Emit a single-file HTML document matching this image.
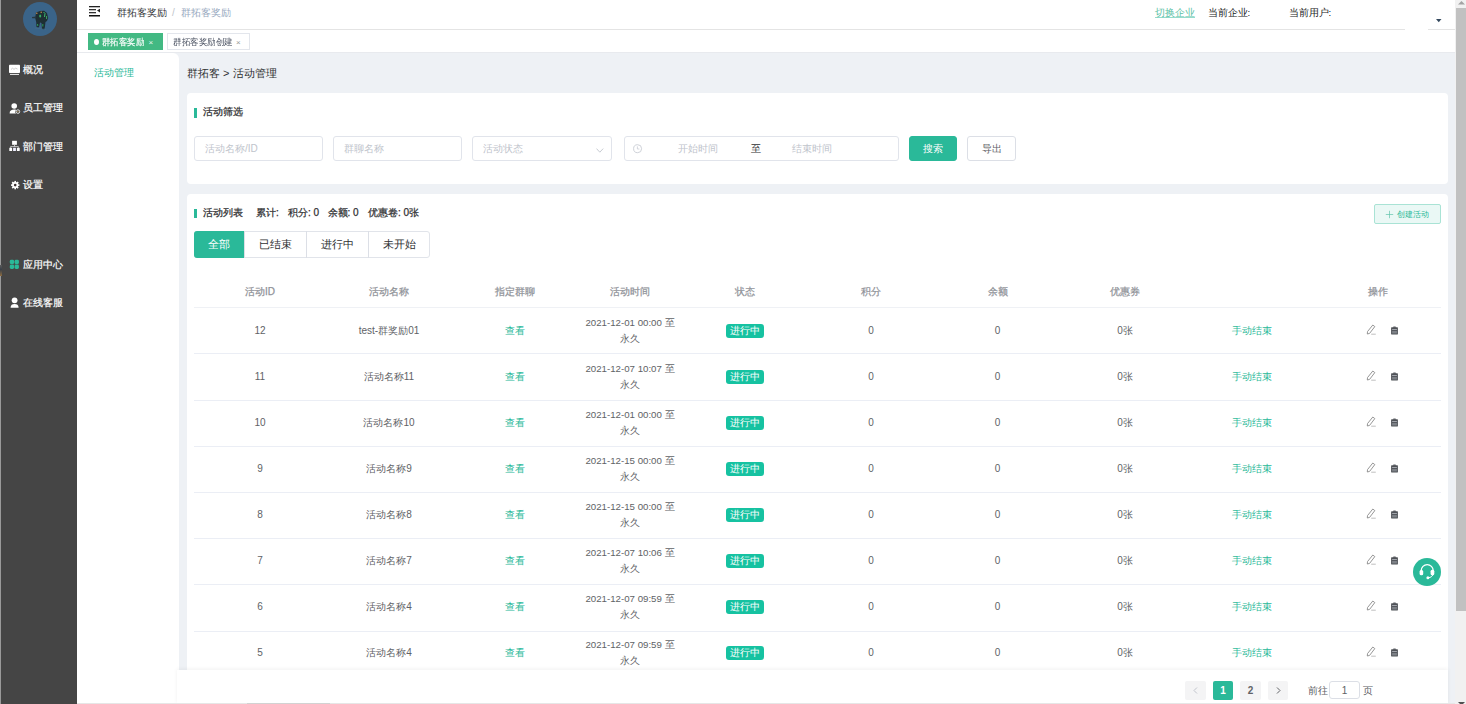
<!DOCTYPE html>
<html><head><meta charset="utf-8">
<style>
*{box-sizing:border-box;margin:0;padding:0}
html,body{width:1466px;height:704px;overflow:hidden;background:#fff;font-family:"Liberation Sans",sans-serif;color:#333}
.abs{position:absolute}
#side{left:0;top:0;width:77px;height:704px;background:#454545;border-left:1px solid #9a9a9a}
#avatar{left:22px;top:2px;width:34px;height:34px;border-radius:50%;background:#3a6489}
.mi{position:absolute;left:22px;color:#fff;font-size:9.8px;line-height:14px;white-space:nowrap;-webkit-text-stroke:0.2px #fff}
.mi .ic{display:inline-block;width:10px;height:10px;vertical-align:-1px;margin-right:4px}
#header{left:77px;top:0;width:1379px;height:30px;background:#fff;border-bottom:1px solid #e4e4e4}
#tags{left:77px;top:30px;width:1379px;height:23px;background:#fff;border-bottom:1px solid #e8eaee}
#main{left:77px;top:53px;width:1379px;height:651px;background:#eef1f5}
#sub{left:77px;top:53px;width:102px;height:651px;background:#fff;border-top-right-radius:6px}
.card{position:absolute;left:187px;width:1261px;background:#fff;border-radius:4px}
.t{position:absolute;white-space:nowrap}
.inp{position:absolute;top:136px;height:25px;border:1px solid #e1e4eb;border-radius:3px;background:#fff;color:#c0c4cc;font-size:10px;line-height:23px;padding-left:10px;white-space:nowrap}
.btn{position:absolute;top:136px;height:25px;border-radius:3px;font-size:10px;line-height:23px;text-align:center}
#sb{left:1455px;top:0;width:11px;height:704px;background:#f1f1f1}
#thumb{left:1456px;top:8px;width:10px;height:603px;background:#c1c1c1}
.cell{position:absolute;text-align:center;font-size:10px;line-height:45px;color:#606266;white-space:nowrap}
.tag{display:inline-block;height:14px;line-height:14px;padding:0 4px;background:#16c2a1;color:#fff;border-radius:3px;font-size:10px;vertical-align:middle}
.pg{position:absolute;top:681px;height:19px;background:#f4f4f5;border-radius:2px;color:#606266;font-size:10px;font-weight:bold;line-height:19px;text-align:center}
</style></head><body>

<div id="side" class="abs">
  <div id="avatar" class="abs"></div>
  <svg class="abs" style="left:27px;top:8px;filter:blur(0.45px)" width="24" height="24" viewBox="0 0 24 24"><g opacity="0.92"><path d="M8 4.5 L12 3 L16 2.8 L19 5 L20.2 10 L19 13 L17.5 14 L16.8 19.5 L16.2 21.5 L14 21 L13.5 15 L12 14.5 L11.2 18.5 L10.5 19.5 L8.5 19 L8.2 14 L7.2 10 Z" fill="#1d2b2c"/><path d="M8 8.5 L4 9 L4.2 10.2 L8 10.2 Z" fill="#26343a"/><ellipse cx="12.2" cy="8" rx="1" ry="1.6" fill="#36b460"/><path d="M15.5 4 L17 5.5 L16.5 9" stroke="#3fc070" stroke-width="1" fill="none"/><path d="M18.6 8 V11" stroke="#3aaa60" stroke-width="1"/><path d="M14.8 16 V18.5 M9.5 16 L9.8 18" stroke="#2aa050" stroke-width="1"/><circle cx="8.8" cy="5.2" r="0.8" fill="#c98a4a"/><circle cx="13.2" cy="4.2" r="0.8" fill="#c98a4a"/></g><path d="M7 20 L18 21.5" stroke="#4a7088" stroke-width="1" opacity="0.6"/></svg>
  <div class="mi" style="top:63px">概况</div>
  <div class="mi" style="top:101px">员工管理</div>
  <div class="mi" style="top:140px">部门管理</div>
  <div class="mi" style="top:178px">设置</div>
  <div class="mi" style="top:258px">应用中心</div>
  <div class="mi" style="top:296px">在线客服</div>
  <svg class="abs" style="left:7px;top:64px" width="13" height="12" viewBox="0 0 13 12"><rect x="1" y="0.8" width="11" height="8.2" rx="0.8" fill="#fff"/><path d="M3 5.5 L4.5 4.2 L6 5.4 L7.5 4.2 L9.5 5" fill="none" stroke="#b7b7b7" stroke-width="0.7"/><rect x="2" y="9.9" width="9" height="1.1" fill="#e0e0e0"/></svg>
  <svg class="abs" style="left:7px;top:101.5px" width="13" height="13" viewBox="0 0 13 13"><circle cx="6.2" cy="4" r="2.8" fill="#fff"/><path d="M1.6 11.6 C1.6 8.6 3.5 7.6 6.1 7.6 C7 7.6 7.6 7.7 8.2 8 A2.5 2.5 0 0 0 8 11.6 Z" fill="#fff"/><circle cx="9.9" cy="9.6" r="1.8" fill="none" stroke="#f0f0f0" stroke-width="0.9"/><circle cx="9.9" cy="9.6" r="0.6" fill="#c9a860"/></svg>
  <svg class="abs" style="left:6.5px;top:139px" width="13" height="13" viewBox="0 0 13 13"><rect x="4.1" y="1.8" width="4.8" height="4" fill="#fff"/><path d="M6.5 5.8 V7.6 M2.6 8.8 V7.6 H10.4 V8.8" fill="none" stroke="#ddd" stroke-width="0.8"/><rect x="1.3" y="8.8" width="2.8" height="3.2" fill="#fff"/><rect x="5.1" y="8.8" width="2.8" height="3.2" fill="#eef"/><rect x="8.9" y="8.8" width="2.8" height="3.2" fill="#fff"/></svg>
  <svg class="abs" style="left:6.5px;top:178px" width="13" height="13" viewBox="0 0 13 13"><g fill="#fff"><circle cx="7.2" cy="7.1" r="3.1"/><g transform="translate(7.2 7.1)"><rect x="-0.8" y="-4.2" width="1.6" height="8.4"/><rect x="-0.8" y="-4.2" width="1.6" height="8.4" transform="rotate(45)"/><rect x="-0.8" y="-4.2" width="1.6" height="8.4" transform="rotate(90)"/><rect x="-0.8" y="-4.2" width="1.6" height="8.4" transform="rotate(135)"/></g></g><circle cx="7.2" cy="7.1" r="1.3" fill="#3a3030"/></svg>
  <svg class="abs" style="left:8px;top:259px" width="11" height="11" viewBox="0 0 11 11"><g fill="#2ab999"><rect x="0.8" y="0.8" width="4.3" height="4.3" rx="1.4"/><rect x="5.6" y="0.8" width="4.3" height="4.3" rx="1.4" transform="rotate(0)"/><rect x="0.8" y="5.6" width="4.3" height="4.3" rx="1.4"/><rect x="5.6" y="5.6" width="4.3" height="4.3" rx="1.4"/></g></svg>
  <svg class="abs" style="left:8px;top:296px" width="12" height="13" viewBox="0 0 12 13"><circle cx="5.6" cy="4.3" r="2.9" fill="#fff"/><path d="M1.6 11.8 C1.6 8.9 3.2 7.9 5.6 7.9 C8 7.9 9.6 8.9 9.6 11.8 Z" fill="#fff"/></svg>
</div>

<div class="abs" style="left:0;top:265px;width:2px;height:11px;background:linear-gradient(#5a5a5a,#3a4048 40%,#8a6a40)"></div>
<div id="header" class="abs"></div>
<svg class="abs" style="left:89px;top:6px" width="12" height="11" viewBox="0 0 12 11"><rect x="0" y="0" width="11" height="1.3" fill="#222"/><rect x="0" y="3" width="7" height="1.3" fill="#333"/><rect x="0" y="6" width="7" height="1.3" fill="#333"/><rect x="0" y="9" width="11" height="1.5" fill="#111"/><path d="M11 2.8 L8 4.6 L11 6.4Z" fill="#222"/></svg>
<div class="t" style="left:117px;top:5.5px;font-size:9.6px;line-height:14px;color:#303133">群拓客奖励</div>
<div class="t" style="left:172px;top:5.5px;font-size:10px;line-height:14px;color:#c0c4cc">/</div>
<div class="t" style="left:180.5px;top:5.5px;font-size:9.6px;line-height:14px;color:#97a8be">群拓客奖励</div>
<div class="t" style="left:1155px;top:5.5px;font-size:9.6px;line-height:14px;color:#5cbfa6;text-decoration:underline;text-decoration-color:rgba(42,185,153,0.5);text-decoration-thickness:0.6px;text-underline-offset:0.5px">切换企业</div>
<div class="t" style="left:1207.5px;top:5.5px;font-size:9.7px;line-height:14px;color:#222">当前企业:</div>
<div class="t" style="left:1288.5px;top:5.5px;font-size:9.7px;line-height:14px;color:#222">当前用户:</div>
<div class="abs" style="left:1405px;top:29px;width:23px;height:1px;background:#fff"></div>
<svg class="abs" style="left:1435.5px;top:19px" width="6" height="4" viewBox="0 0 6 4"><path d="M0 0 L5.5 0 L2.75 3.2Z" fill="#34495e"/></svg>
<div id="tags" class="abs"></div>
<div class="abs" style="left:88px;top:33px;width:75px;height:17px;background:#42b983"></div>
<div class="abs" style="left:93.5px;top:38.5px;width:5.5px;height:6.5px;border-radius:50%;background:#fff"></div>
<div class="t" style="left:102px;top:35.8px;font-size:8.8px;transform:scaleX(0.935);-webkit-text-stroke:0.15px #fff;transform-origin:0 0;line-height:13px;color:#fff">群拓客奖励</div>
<div class="t" style="left:148.5px;top:35.5px;font-size:8px;line-height:13px;color:#e8f6ef">×</div>
<div class="abs" style="left:167px;top:33px;width:83px;height:17px;background:#fff;border:1px solid #e3e6ec"></div>
<div class="t" style="left:172.5px;top:35.8px;font-size:8.8px;transform:scaleX(0.95);transform-origin:0 0;line-height:13px;color:#495060">群拓客奖励创建</div>
<div class="t" style="left:236px;top:35.5px;font-size:8px;line-height:13px;color:#999">×</div>
<div id="main" class="abs"></div>
<div id="sub" class="abs"></div>

<div class="t" style="left:94px;top:65.5px;font-size:10px;line-height:14px;color:#2ab999">活动管理</div>
<div class="t" style="left:187px;top:65px;font-size:11px;line-height:16px;color:#303133">群拓客 &gt; 活动管理</div>

<div class="card" style="top:93px;height:91px"></div>
<div class="abs" style="left:194px;top:108px;width:3px;height:10px;background:#2ab999"></div>
<div class="t" style="left:203px;top:105px;font-size:10px;line-height:14px;color:#303133;-webkit-text-stroke:0.25px #303133">活动筛选</div>
<div class="inp" style="left:194px;width:129px">活动名称/ID</div>
<div class="inp" style="left:333px;width:129px">群聊名称</div>
<div class="inp" style="left:472px;width:140px">活动状态<svg class="abs" style="left:123px;top:11px" width="8" height="5" viewBox="0 0 8 5"><path d="M0.5 0.6 L3.8 4.2 L7.2 0.6" fill="none" stroke="#c0c4cc" stroke-width="0.9"/></svg></div>
<div class="inp" style="left:624px;width:275px;padding:0">
 <svg class="abs" style="left:8px;top:6px" width="11" height="11" viewBox="0 0 11 11"><circle cx="4.6" cy="5.7" r="4" fill="none" stroke="#c8ccd4" stroke-width="0.9"/><path d="M4.4 3.4 V6 H6.4" fill="none" stroke="#c8ccd4" stroke-width="0.8"/></svg>
 <span class="abs" style="left:53px">开始时间</span>
 <span class="abs" style="left:126px;color:#303133">至</span>
 <span class="abs" style="left:167px">结束时间</span>
</div>
<div class="btn" style="left:909px;width:48px;background:#2ab999;color:#fff;border:1px solid #2ab999">搜索</div>
<div class="btn" style="left:967px;width:49px;background:#fff;color:#606266;border:1px solid #dcdfe6">导出</div>
<div class="card" style="top:194px;height:510px"></div>
<div class="abs" style="left:194px;top:209px;width:3px;height:9px;background:#2ab999"></div>
<div class="t" style="left:203px;top:206px;font-size:10px;line-height:14px;color:#303133;-webkit-text-stroke:0.25px #303133">活动列表</div>
<div class="t" style="left:256px;top:206px;font-size:10px;line-height:14px;color:#303133;-webkit-text-stroke:0.25px #303133">累计:</div>
<div class="t" style="left:288px;top:206px;font-size:10px;line-height:14px;color:#303133;-webkit-text-stroke:0.25px #303133">积分: 0</div>
<div class="t" style="left:327.5px;top:206px;font-size:10px;line-height:14px;color:#303133;-webkit-text-stroke:0.25px #303133">余额: 0</div>
<div class="t" style="left:368px;top:206px;font-size:10px;line-height:14px;color:#303133;-webkit-text-stroke:0.25px #303133">优惠卷: 0张</div>
<div class="abs" style="left:1374px;top:204px;width:67px;height:20px;border:1px solid #a9e3d5;background:#eaf8f5;border-radius:2px;"></div>
<svg class="abs" style="left:1385px;top:209.5px" width="9" height="9" viewBox="0 0 9 9"><path d="M4.5 0.8 V8.2 M0.8 4.5 H8.2" stroke="#62c4ac" stroke-width="0.7"/></svg>
<div class="t" style="left:1397px;top:207.5px;font-size:8.3px;line-height:13px;color:#2ab999">创建活动</div>
<div class="abs" style="left:194px;top:230.5px;width:236px;height:27px;border:1px solid #e1e4ea;border-radius:3px;background:#fff"></div>
<div class="abs" style="left:194px;top:230.5px;width:50px;height:27px;background:#2ab999;border-radius:3px 0 0 3px;color:#fff;font-size:11px;line-height:27px;text-align:center">全部</div>
<div class="abs" style="left:244px;top:230.5px;width:62px;height:27px;border-left:1px solid #dcdfe6;color:#303133;font-size:11px;line-height:27px;text-align:center">已结束</div>
<div class="abs" style="left:306px;top:230.5px;width:62px;height:27px;border-left:1px solid #dcdfe6;color:#303133;font-size:11px;line-height:27px;text-align:center">进行中</div>
<div class="abs" style="left:368px;top:230.5px;width:62px;height:27px;border-left:1px solid #dcdfe6;color:#303133;font-size:11px;line-height:27px;text-align:center">未开始</div>
<div class="cell" style="left:194px;top:277.00px;width:132px;height:30px;color:#909399;-webkit-text-stroke:0.25px #909399;line-height:30px">活动ID</div>
<div class="cell" style="left:326px;top:277.00px;width:126px;height:30px;color:#909399;-webkit-text-stroke:0.25px #909399;line-height:30px">活动名称</div>
<div class="cell" style="left:452px;top:277.00px;width:126px;height:30px;color:#909399;-webkit-text-stroke:0.25px #909399;line-height:30px">指定群聊</div>
<div class="cell" style="left:578px;top:277.00px;width:104px;height:30px;color:#909399;-webkit-text-stroke:0.25px #909399;line-height:30px">活动时间</div>
<div class="cell" style="left:682px;top:277.00px;width:126px;height:30px;color:#909399;-webkit-text-stroke:0.25px #909399;line-height:30px">状态</div>
<div class="cell" style="left:808px;top:277.00px;width:126px;height:30px;color:#909399;-webkit-text-stroke:0.25px #909399;line-height:30px">积分</div>
<div class="cell" style="left:934px;top:277.00px;width:127px;height:30px;color:#909399;-webkit-text-stroke:0.25px #909399;line-height:30px">余额</div>
<div class="cell" style="left:1061px;top:277.00px;width:128px;height:30px;color:#909399;-webkit-text-stroke:0.25px #909399;line-height:30px">优惠券</div>
<div class="cell" style="left:1189px;top:277.00px;width:125px;height:30px;color:#909399;-webkit-text-stroke:0.25px #909399;line-height:30px"></div>
<div class="cell" style="left:1314px;top:277.00px;width:127px;height:30px;color:#909399;-webkit-text-stroke:0.25px #909399;line-height:30px">操作</div>
<div class="abs" style="left:194px;top:307px;width:1247px;height:1px;background:#eff1f5"></div>
<div class="cell" style="left:194px;top:307.80px;width:132px;height:45px;">12</div>
<div class="cell" style="left:326px;top:307.80px;width:126px;height:45px;">test-群奖励01</div>
<div class="cell" style="left:452px;top:307.80px;width:126px;height:45px;color:#2ab999">查看</div>
<div class="cell" style="left:578px;top:307.80px;width:104px;height:45px;line-height:16px"><div style="line-height:16px;padding-top:7.5px;font-size:9.7px">2021-12-01 00:00 至<br>永久</div></div>
<div class="cell" style="left:682px;top:307.80px;width:126px;height:45px;"><span class="tag">进行中</span></div>
<div class="cell" style="left:808px;top:307.80px;width:126px;height:45px;">0</div>
<div class="cell" style="left:934px;top:307.80px;width:127px;height:45px;">0</div>
<div class="cell" style="left:1061px;top:307.80px;width:128px;height:45px;">0张</div>
<div class="cell" style="left:1189px;top:307.80px;width:125px;height:45px;color:#2ab999">手动结束</div>
<svg class="abs" style="left:1366px;top:324.30px" width="11" height="11" viewBox="0 0 11 11"><path d="M6.8 1 L8.8 2.6 L3.6 9.4 L1.3 10 L1.5 7.6 Z" fill="none" stroke="#8a8a8a" stroke-width="0.9"/><path d="M5.2 10.2 H9.8" stroke="#b0b0b0" stroke-width="0.8"/></svg>
<svg class="abs" style="left:1391px;top:326.30px" width="8" height="9" viewBox="0 0 8 9"><rect x="0.1" y="1.3" width="6.8" height="7.2" rx="0.4" fill="#4f5257"/><rect x="2.1" y="0.4" width="2.8" height="1.6" rx="0.5" fill="#5a5d62"/><rect x="1.1" y="3.1" width="4.8" height="0.8" fill="#b8bcc2"/><rect x="1.1" y="4.9" width="4.8" height="2.6" fill="#7d8187"/></svg>
<div class="abs" style="left:194px;top:353px;width:1247px;height:1px;background:#ebeef5"></div>
<div class="cell" style="left:194px;top:353.80px;width:132px;height:45px;">11</div>
<div class="cell" style="left:326px;top:353.80px;width:126px;height:45px;">活动名称11</div>
<div class="cell" style="left:452px;top:353.80px;width:126px;height:45px;color:#2ab999">查看</div>
<div class="cell" style="left:578px;top:353.80px;width:104px;height:45px;line-height:16px"><div style="line-height:16px;padding-top:7.5px;font-size:9.7px">2021-12-07 10:07 至<br>永久</div></div>
<div class="cell" style="left:682px;top:353.80px;width:126px;height:45px;"><span class="tag">进行中</span></div>
<div class="cell" style="left:808px;top:353.80px;width:126px;height:45px;">0</div>
<div class="cell" style="left:934px;top:353.80px;width:127px;height:45px;">0</div>
<div class="cell" style="left:1061px;top:353.80px;width:128px;height:45px;">0张</div>
<div class="cell" style="left:1189px;top:353.80px;width:125px;height:45px;color:#2ab999">手动结束</div>
<svg class="abs" style="left:1366px;top:370.30px" width="11" height="11" viewBox="0 0 11 11"><path d="M6.8 1 L8.8 2.6 L3.6 9.4 L1.3 10 L1.5 7.6 Z" fill="none" stroke="#8a8a8a" stroke-width="0.9"/><path d="M5.2 10.2 H9.8" stroke="#b0b0b0" stroke-width="0.8"/></svg>
<svg class="abs" style="left:1391px;top:372.30px" width="8" height="9" viewBox="0 0 8 9"><rect x="0.1" y="1.3" width="6.8" height="7.2" rx="0.4" fill="#4f5257"/><rect x="2.1" y="0.4" width="2.8" height="1.6" rx="0.5" fill="#5a5d62"/><rect x="1.1" y="3.1" width="4.8" height="0.8" fill="#b8bcc2"/><rect x="1.1" y="4.9" width="4.8" height="2.6" fill="#7d8187"/></svg>
<div class="abs" style="left:194px;top:400px;width:1247px;height:1px;background:#ebeef5"></div>
<div class="cell" style="left:194px;top:399.80px;width:132px;height:45px;">10</div>
<div class="cell" style="left:326px;top:399.80px;width:126px;height:45px;">活动名称10</div>
<div class="cell" style="left:452px;top:399.80px;width:126px;height:45px;color:#2ab999">查看</div>
<div class="cell" style="left:578px;top:399.80px;width:104px;height:45px;line-height:16px"><div style="line-height:16px;padding-top:7.5px;font-size:9.7px">2021-12-01 00:00 至<br>永久</div></div>
<div class="cell" style="left:682px;top:399.80px;width:126px;height:45px;"><span class="tag">进行中</span></div>
<div class="cell" style="left:808px;top:399.80px;width:126px;height:45px;">0</div>
<div class="cell" style="left:934px;top:399.80px;width:127px;height:45px;">0</div>
<div class="cell" style="left:1061px;top:399.80px;width:128px;height:45px;">0张</div>
<div class="cell" style="left:1189px;top:399.80px;width:125px;height:45px;color:#2ab999">手动结束</div>
<svg class="abs" style="left:1366px;top:416.30px" width="11" height="11" viewBox="0 0 11 11"><path d="M6.8 1 L8.8 2.6 L3.6 9.4 L1.3 10 L1.5 7.6 Z" fill="none" stroke="#8a8a8a" stroke-width="0.9"/><path d="M5.2 10.2 H9.8" stroke="#b0b0b0" stroke-width="0.8"/></svg>
<svg class="abs" style="left:1391px;top:418.30px" width="8" height="9" viewBox="0 0 8 9"><rect x="0.1" y="1.3" width="6.8" height="7.2" rx="0.4" fill="#4f5257"/><rect x="2.1" y="0.4" width="2.8" height="1.6" rx="0.5" fill="#5a5d62"/><rect x="1.1" y="3.1" width="4.8" height="0.8" fill="#b8bcc2"/><rect x="1.1" y="4.9" width="4.8" height="2.6" fill="#7d8187"/></svg>
<div class="abs" style="left:194px;top:446px;width:1247px;height:1px;background:#ebeef5"></div>
<div class="cell" style="left:194px;top:445.80px;width:132px;height:45px;">9</div>
<div class="cell" style="left:326px;top:445.80px;width:126px;height:45px;">活动名称9</div>
<div class="cell" style="left:452px;top:445.80px;width:126px;height:45px;color:#2ab999">查看</div>
<div class="cell" style="left:578px;top:445.80px;width:104px;height:45px;line-height:16px"><div style="line-height:16px;padding-top:7.5px;font-size:9.7px">2021-12-15 00:00 至<br>永久</div></div>
<div class="cell" style="left:682px;top:445.80px;width:126px;height:45px;"><span class="tag">进行中</span></div>
<div class="cell" style="left:808px;top:445.80px;width:126px;height:45px;">0</div>
<div class="cell" style="left:934px;top:445.80px;width:127px;height:45px;">0</div>
<div class="cell" style="left:1061px;top:445.80px;width:128px;height:45px;">0张</div>
<div class="cell" style="left:1189px;top:445.80px;width:125px;height:45px;color:#2ab999">手动结束</div>
<svg class="abs" style="left:1366px;top:462.30px" width="11" height="11" viewBox="0 0 11 11"><path d="M6.8 1 L8.8 2.6 L3.6 9.4 L1.3 10 L1.5 7.6 Z" fill="none" stroke="#8a8a8a" stroke-width="0.9"/><path d="M5.2 10.2 H9.8" stroke="#b0b0b0" stroke-width="0.8"/></svg>
<svg class="abs" style="left:1391px;top:464.30px" width="8" height="9" viewBox="0 0 8 9"><rect x="0.1" y="1.3" width="6.8" height="7.2" rx="0.4" fill="#4f5257"/><rect x="2.1" y="0.4" width="2.8" height="1.6" rx="0.5" fill="#5a5d62"/><rect x="1.1" y="3.1" width="4.8" height="0.8" fill="#b8bcc2"/><rect x="1.1" y="4.9" width="4.8" height="2.6" fill="#7d8187"/></svg>
<div class="abs" style="left:194px;top:492px;width:1247px;height:1px;background:#ebeef5"></div>
<div class="cell" style="left:194px;top:491.80px;width:132px;height:45px;">8</div>
<div class="cell" style="left:326px;top:491.80px;width:126px;height:45px;">活动名称8</div>
<div class="cell" style="left:452px;top:491.80px;width:126px;height:45px;color:#2ab999">查看</div>
<div class="cell" style="left:578px;top:491.80px;width:104px;height:45px;line-height:16px"><div style="line-height:16px;padding-top:7.5px;font-size:9.7px">2021-12-15 00:00 至<br>永久</div></div>
<div class="cell" style="left:682px;top:491.80px;width:126px;height:45px;"><span class="tag">进行中</span></div>
<div class="cell" style="left:808px;top:491.80px;width:126px;height:45px;">0</div>
<div class="cell" style="left:934px;top:491.80px;width:127px;height:45px;">0</div>
<div class="cell" style="left:1061px;top:491.80px;width:128px;height:45px;">0张</div>
<div class="cell" style="left:1189px;top:491.80px;width:125px;height:45px;color:#2ab999">手动结束</div>
<svg class="abs" style="left:1366px;top:508.30px" width="11" height="11" viewBox="0 0 11 11"><path d="M6.8 1 L8.8 2.6 L3.6 9.4 L1.3 10 L1.5 7.6 Z" fill="none" stroke="#8a8a8a" stroke-width="0.9"/><path d="M5.2 10.2 H9.8" stroke="#b0b0b0" stroke-width="0.8"/></svg>
<svg class="abs" style="left:1391px;top:510.30px" width="8" height="9" viewBox="0 0 8 9"><rect x="0.1" y="1.3" width="6.8" height="7.2" rx="0.4" fill="#4f5257"/><rect x="2.1" y="0.4" width="2.8" height="1.6" rx="0.5" fill="#5a5d62"/><rect x="1.1" y="3.1" width="4.8" height="0.8" fill="#b8bcc2"/><rect x="1.1" y="4.9" width="4.8" height="2.6" fill="#7d8187"/></svg>
<div class="abs" style="left:194px;top:538px;width:1247px;height:1px;background:#ebeef5"></div>
<div class="cell" style="left:194px;top:537.80px;width:132px;height:45px;">7</div>
<div class="cell" style="left:326px;top:537.80px;width:126px;height:45px;">活动名称7</div>
<div class="cell" style="left:452px;top:537.80px;width:126px;height:45px;color:#2ab999">查看</div>
<div class="cell" style="left:578px;top:537.80px;width:104px;height:45px;line-height:16px"><div style="line-height:16px;padding-top:7.5px;font-size:9.7px">2021-12-07 10:06 至<br>永久</div></div>
<div class="cell" style="left:682px;top:537.80px;width:126px;height:45px;"><span class="tag">进行中</span></div>
<div class="cell" style="left:808px;top:537.80px;width:126px;height:45px;">0</div>
<div class="cell" style="left:934px;top:537.80px;width:127px;height:45px;">0</div>
<div class="cell" style="left:1061px;top:537.80px;width:128px;height:45px;">0张</div>
<div class="cell" style="left:1189px;top:537.80px;width:125px;height:45px;color:#2ab999">手动结束</div>
<svg class="abs" style="left:1366px;top:554.30px" width="11" height="11" viewBox="0 0 11 11"><path d="M6.8 1 L8.8 2.6 L3.6 9.4 L1.3 10 L1.5 7.6 Z" fill="none" stroke="#8a8a8a" stroke-width="0.9"/><path d="M5.2 10.2 H9.8" stroke="#b0b0b0" stroke-width="0.8"/></svg>
<svg class="abs" style="left:1391px;top:556.30px" width="8" height="9" viewBox="0 0 8 9"><rect x="0.1" y="1.3" width="6.8" height="7.2" rx="0.4" fill="#4f5257"/><rect x="2.1" y="0.4" width="2.8" height="1.6" rx="0.5" fill="#5a5d62"/><rect x="1.1" y="3.1" width="4.8" height="0.8" fill="#b8bcc2"/><rect x="1.1" y="4.9" width="4.8" height="2.6" fill="#7d8187"/></svg>
<div class="abs" style="left:194px;top:584px;width:1247px;height:1px;background:#ebeef5"></div>
<div class="cell" style="left:194px;top:583.80px;width:132px;height:45px;">6</div>
<div class="cell" style="left:326px;top:583.80px;width:126px;height:45px;">活动名称4</div>
<div class="cell" style="left:452px;top:583.80px;width:126px;height:45px;color:#2ab999">查看</div>
<div class="cell" style="left:578px;top:583.80px;width:104px;height:45px;line-height:16px"><div style="line-height:16px;padding-top:7.5px;font-size:9.7px">2021-12-07 09:59 至<br>永久</div></div>
<div class="cell" style="left:682px;top:583.80px;width:126px;height:45px;"><span class="tag">进行中</span></div>
<div class="cell" style="left:808px;top:583.80px;width:126px;height:45px;">0</div>
<div class="cell" style="left:934px;top:583.80px;width:127px;height:45px;">0</div>
<div class="cell" style="left:1061px;top:583.80px;width:128px;height:45px;">0张</div>
<div class="cell" style="left:1189px;top:583.80px;width:125px;height:45px;color:#2ab999">手动结束</div>
<svg class="abs" style="left:1366px;top:600.30px" width="11" height="11" viewBox="0 0 11 11"><path d="M6.8 1 L8.8 2.6 L3.6 9.4 L1.3 10 L1.5 7.6 Z" fill="none" stroke="#8a8a8a" stroke-width="0.9"/><path d="M5.2 10.2 H9.8" stroke="#b0b0b0" stroke-width="0.8"/></svg>
<svg class="abs" style="left:1391px;top:602.30px" width="8" height="9" viewBox="0 0 8 9"><rect x="0.1" y="1.3" width="6.8" height="7.2" rx="0.4" fill="#4f5257"/><rect x="2.1" y="0.4" width="2.8" height="1.6" rx="0.5" fill="#5a5d62"/><rect x="1.1" y="3.1" width="4.8" height="0.8" fill="#b8bcc2"/><rect x="1.1" y="4.9" width="4.8" height="2.6" fill="#7d8187"/></svg>
<div class="abs" style="left:194px;top:631px;width:1247px;height:1px;background:#ebeef5"></div>
<div class="cell" style="left:194px;top:629.80px;width:132px;height:45px;">5</div>
<div class="cell" style="left:326px;top:629.80px;width:126px;height:45px;">活动名称4</div>
<div class="cell" style="left:452px;top:629.80px;width:126px;height:45px;color:#2ab999">查看</div>
<div class="cell" style="left:578px;top:629.80px;width:104px;height:45px;line-height:16px"><div style="line-height:16px;padding-top:7.5px;font-size:9.7px">2021-12-07 09:59 至<br>永久</div></div>
<div class="cell" style="left:682px;top:629.80px;width:126px;height:45px;"><span class="tag">进行中</span></div>
<div class="cell" style="left:808px;top:629.80px;width:126px;height:45px;">0</div>
<div class="cell" style="left:934px;top:629.80px;width:127px;height:45px;">0</div>
<div class="cell" style="left:1061px;top:629.80px;width:128px;height:45px;">0张</div>
<div class="cell" style="left:1189px;top:629.80px;width:125px;height:45px;color:#2ab999">手动结束</div>
<svg class="abs" style="left:1366px;top:646.30px" width="11" height="11" viewBox="0 0 11 11"><path d="M6.8 1 L8.8 2.6 L3.6 9.4 L1.3 10 L1.5 7.6 Z" fill="none" stroke="#8a8a8a" stroke-width="0.9"/><path d="M5.2 10.2 H9.8" stroke="#b0b0b0" stroke-width="0.8"/></svg>
<svg class="abs" style="left:1391px;top:648.30px" width="8" height="9" viewBox="0 0 8 9"><rect x="0.1" y="1.3" width="6.8" height="7.2" rx="0.4" fill="#4f5257"/><rect x="2.1" y="0.4" width="2.8" height="1.6" rx="0.5" fill="#5a5d62"/><rect x="1.1" y="3.1" width="4.8" height="0.8" fill="#b8bcc2"/><rect x="1.1" y="4.9" width="4.8" height="2.6" fill="#7d8187"/></svg>
<div class="abs" style="left:194px;top:677px;width:1247px;height:1px;background:#ebeef5"></div>
<div class="abs" style="left:177px;top:670px;width:1271px;height:34px;background:#fff;box-shadow:0 -1px 4px rgba(0,0,0,0.06)"></div>
<div class="abs" style="left:77px;top:703px;width:1379px;height:1px;background:#e6e6e6"></div>
<div class="abs" style="left:247px;top:703px;width:83px;height:1px;background:#d2d2d2"></div>
<div class="pg" style="left:1185px;width:21px"><svg style="position:absolute;left:8px;top:6px" width="5" height="7" viewBox="0 0 5 7"><path d="M4 0.5 L1 3.5 L4 6.5" fill="none" stroke="#c0c4cc" stroke-width="1"/></svg></div>
<div class="pg" style="left:1213px;width:20px;background:#2ab999;color:#fff">1</div>
<div class="pg" style="left:1240px;width:21px">2</div>
<div class="pg" style="left:1268px;width:20px"><svg style="position:absolute;left:7.5px;top:6px" width="5" height="7" viewBox="0 0 5 7"><path d="M1 0.5 L4 3.5 L1 6.5" fill="none" stroke="#606266" stroke-width="1"/></svg></div>
<div class="t" style="left:1308px;top:684px;font-size:10px;line-height:14px;color:#606266">前往</div>
<div class="abs" style="left:1329px;top:681px;width:31px;height:18px;border:1px solid #dcdfe6;border-radius:3px;font-size:10px;line-height:18px;text-align:center;color:#606266">1</div>
<div class="t" style="left:1363px;top:684px;font-size:10px;line-height:14px;color:#606266">页</div>
<div class="abs" style="left:1413px;top:557.5px;width:28px;height:28px;border-radius:50%;background:#2ab999"></div>
<svg class="abs" style="left:1413px;top:557.5px" width="28" height="28" viewBox="0 0 28 28"><path d="M8.2 14.5 V12.6 A6 6 0 0 1 20.2 12.6 V14.5" fill="none" stroke="#fff" stroke-width="1.3"/><rect x="6.6" y="11.9" width="3.6" height="5.4" rx="1.6" fill="#fff"/><rect x="17.6" y="11.7" width="3.7" height="5.6" rx="1.6" fill="#fff"/><path d="M19.8 16.8 C19.2 18.6 17.6 19.4 15.6 19.7" fill="none" stroke="#fff" stroke-width="1"/><circle cx="14.9" cy="19.8" r="1.5" fill="#fff"/></svg>
<div id="sb" class="abs"></div>
<div id="thumb" class="abs"></div>
<svg class="abs" style="left:1457px;top:0px" width="9" height="6" viewBox="0 0 9 6"><path d="M1 4.5 L4.5 1 L8 4.5Z" fill="#a3a3a3"/></svg>
<svg class="abs" style="left:1457px;top:701px" width="9" height="3" viewBox="0 0 9 3"><path d="M1 1 L8 1 L4.5 4.5Z" fill="#505050"/></svg>
</body></html>
